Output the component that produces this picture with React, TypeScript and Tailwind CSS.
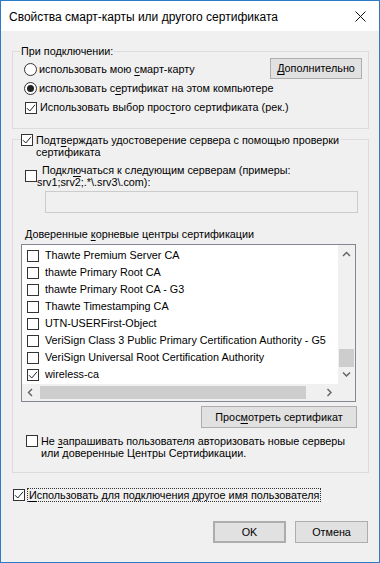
import type { ReactNode } from 'react';

const FONT = { fontFamily: '"Liberation Sans", Arial, sans-serif' };

function Check({ checked = false }: { checked?: boolean }) {
  return (
    <span className="inline-flex w-[12px] h-[12px] shrink-0 border border-[#333333] bg-white items-center justify-center">
      {checked && (
        <svg width="10" height="10" viewBox="0 0 10 10" fill="none">
          <path d="M1 5.2 L3.8 8 L9 1.8" stroke="#222" strokeWidth="1" />
        </svg>
      )}
    </span>
  );
}

function Radio({ checked = false }: { checked?: boolean }) {
  return (
    <span className="inline-flex w-[13px] h-[13px] shrink-0 rounded-full border border-[#333333] bg-white items-center justify-center">
      {checked && <span className="w-[7px] h-[7px] rounded-full bg-[#222]" />}
    </span>
  );
}

function Btn({ children, className = '' }: { children: ReactNode; className?: string }) {
  return (
    <button className={`bg-[#e1e1e1] border border-[#adadad] text-black flex items-center justify-center ${className}`}>
      {children}
    </button>
  );
}

function Chevron({ dir }: { dir: 'up' | 'down' | 'left' | 'right' }) {
  const paths = {
    up: 'M1 5 L4.5 1.5 L8 5',
    down: 'M1 1.5 L4.5 5 L8 1.5',
    left: 'M5 1 L1.5 4.5 L5 8',
    right: 'M1.5 1 L5 4.5 L1.5 8',
  };
  const wide = dir === 'up' || dir === 'down';
  return (
    <svg width={wide ? 9 : 7} height={wide ? 7 : 9} viewBox={wide ? '0 0 9 7' : '0 0 7 9'} fill="none">
      <path d={paths[dir]} stroke="#606060" strokeWidth="1.4" />
    </svg>
  );
}

const certs = [
  { name: 'Thawte Premium Server CA', checked: false },
  { name: 'thawte Primary Root CA', checked: false },
  { name: 'thawte Primary Root CA - G3', checked: false },
  { name: 'Thawte Timestamping CA', checked: false },
  { name: 'UTN-USERFirst-Object', checked: false },
  { name: 'VeriSign Class 3 Public Primary Certification Authority - G5', checked: false },
  { name: 'VeriSign Universal Root Certification Authority', checked: false },
  { name: 'wireless-ca', checked: true },
];

export default function App() {
  return (
    <div
      style={FONT}
      className="w-[380px] h-[563px] bg-[#f0f0f0] border border-[#2b7bc9] flex flex-col text-[10.8px] text-black overflow-hidden whitespace-nowrap"
    >
      {/* Title bar */}
      <div className="h-[30px] bg-white flex items-center justify-between pl-[8px] pr-[10px] shrink-0">
        <span className="text-[12px] pt-[1px]">Свойства смарт-карты или другого сертификата</span>
        <svg width="11" height="11" viewBox="0 0 11 11" fill="none" className="mr-[3px]">
          <path d="M0.5 0.5 L10.5 10.5 M10.5 0.5 L0.5 10.5" stroke="#111" strokeWidth="1" />
        </svg>
      </div>

      {/* При подключении */}
      <div className="mt-[20px] ml-[11px] mr-[10px] border border-[#dcdcdc] pb-[11px]">
        <div className="-mt-[8px] ml-[7px] w-fit bg-[#f0f0f0] px-[1px] leading-[15px]">При подключении:</div>
        <div className="h-[20px] flex items-center justify-between pl-[11px] pr-[6px]">
          <div className="flex items-center gap-[2px]">
            <Radio />
            <span>использовать мою <u className="underline-offset-2">с</u>март-карту</span>
          </div>
          <Btn className="w-[92px] h-[21px] mt-[-1px]">
            <span><u className="underline-offset-2">Д</u>ополнительно</span>
          </Btn>
        </div>
        <div className="h-[19px] flex items-center gap-[2px] pl-[11px]">
          <Radio checked />
          <span>использовать с<u className="underline-offset-2">е</u>ртификат на этом компьютере</span>
        </div>
        <div className="h-[19px] flex items-center gap-[3px] pl-[12px]">
          <Check checked />
          <span>Использовать выбор прос<u className="underline-offset-2">т</u>ого сертификата (рек.)</span>
        </div>
      </div>

      {/* Подтверждать удостоверение сервера */}
      <div className="mt-[10px] ml-[11px] mr-[10px] border border-[#dcdcdc] pb-[13px] flex flex-col">
        <div className="-mt-[6px] ml-[8px] w-fit bg-[#f0f0f0] pr-[2px] flex items-start gap-[3px] leading-[12px]">
          <Check checked />
          <span>
            Подт<u className="underline-offset-2">в</u>ерждать удостоверение сервера с помощью проверки<br />
            сертификата
          </span>
        </div>

        <div className="mt-[6px] ml-[12px] flex items-center leading-[12px]">
          <Check />
          <span>
            <span className="pl-[5px]">Подкл<u className="underline-offset-2">ю</u>чаться к следующим серверам (примеры:</span><br />
            srv1;srv2;.*\.srv3\.com):
          </span>
        </div>

        <div className="mt-[3px] ml-[32px] mr-[10px] h-[22px] border border-[#cccccc] bg-[#f0f0f0]" />

        <div className="mt-[15px] ml-[12px] leading-[12px]">
          Доверенные <u className="underline-offset-2">к</u>орневые центры сертификации
        </div>

        {/* List box */}
        <div className="mt-[4px] ml-[8px] w-[335px] h-[158px] border border-[#828790] bg-white flex flex-col">
          <div className="flex h-[139px]">
            <div className="flex-1 pt-[2px] overflow-hidden">
              {certs.map((c) => (
                <div key={c.name} className="h-[17px] flex items-center pl-[5px] gap-[6px]">
                  <Check checked={c.checked} />
                  <span>{c.name}</span>
                </div>
              ))}
            </div>
            <div className="w-[17px] bg-[#f0f0f0] flex flex-col">
              <div className="h-[17px] pt-[2px] flex items-center justify-center"><Chevron dir="up" /></div>
              <div className="flex-1 flex flex-col justify-end px-[1px]">
                <div className="h-[18px] bg-[#cdcdcd]" />
              </div>
              <div className="h-[17px] pb-[2px] flex items-center justify-center"><Chevron dir="down" /></div>
            </div>
          </div>
          <div className="flex h-[17px] bg-[#f0f0f0]">
            <div className="w-[17px] flex items-center justify-center"><Chevron dir="left" /></div>
            <div className="flex-1 py-[2px] pl-[1px] pr-[15px]">
              <div className="h-full bg-[#cdcdcd]" />
            </div>
            <div className="w-[17px] flex items-center justify-center"><Chevron dir="right" /></div>
            <div className="w-[17px]" />
          </div>
        </div>

        <div className="mt-[4px] mr-[11px] flex justify-end">
          <Btn className="w-[156px] h-[22px]">
            <span>Прос<u className="underline-offset-2">м</u>отреть сертификат</span>
          </Btn>
        </div>

        <div className="mt-[7px] ml-[13px] flex items-start gap-[3px] leading-[12px]">
          <Check />
          <span>
            Не <u className="underline-offset-2">з</u>апрашивать пользователя авторизовать новые серверы<br />
            или доверенные Центры Сертификации.
          </span>
        </div>
      </div>

      {/* Другое имя пользователя */}
      <div className="mt-[13px] ml-[12px] h-[18px] flex items-center gap-[2px]">
        <Check checked />
        <span className="border border-dotted border-[#333] px-[1px] leading-[12px]">
          <u className="underline-offset-2">И</u>спользовать для подключения другое имя пользователя
        </span>
      </div>

      {/* Buttons */}
      <div className="mt-[17px] mr-[11px] flex justify-end gap-[9px]">
        <Btn className="w-[73px] h-[22px] border-2 border-[#0078d7]">OK</Btn>
        <Btn className="w-[73px] h-[22px]">Отмена</Btn>
      </div>
    </div>
  );
}
